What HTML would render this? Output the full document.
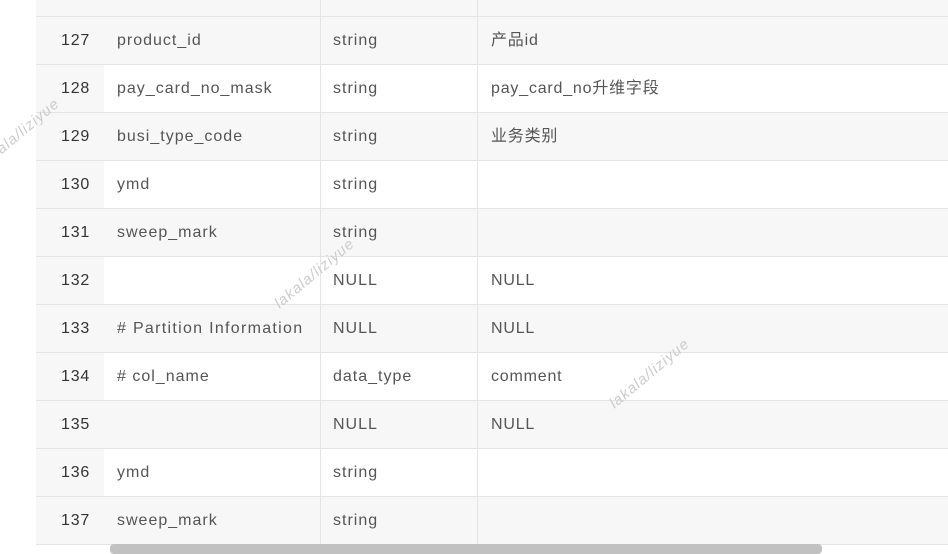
<!DOCTYPE html>
<html><head><meta charset="utf-8"><style>
body{margin:0;width:948px;height:552px;overflow:hidden;background:#fff;font-family:"Liberation Sans","Noto Sans CJK SC",sans-serif;position:relative}
.r{position:absolute;left:36px;width:912px;height:47px;border-bottom:1px solid #e4e4e4;font-size:16px;letter-spacing:1px;color:#555}
.r.g{background:#f7f7f7}
.r .n{position:absolute;left:0;top:0;width:68px;height:47px;background:#f7f7f7;color:#333;line-height:47px;text-indent:25px;letter-spacing:.8px}
.r span{position:absolute;top:0;line-height:47px;white-space:nowrap}
.c1{left:81px}.c2{left:297px}.c3{left:455px}
.c3{letter-spacing:.8px}
.v1,.v2{position:absolute;top:0;width:1px;height:545px;background:#e4e4e4}
.v1{left:320px}.v2{left:477px}
.wm{position:absolute;color:#ccc;font-size:15px;font-style:italic;transform:rotate(-40deg);white-space:nowrap;letter-spacing:1px}
</style></head><body>
<div class="r g" style="top:-31px"><div class="n"></div></div>
<div class="r g" style="top:17px"><div class="n">127</div><span class="c1">product_id</span><span class="c2">string</span><span class="c3">产品id</span></div>
<div class="r" style="top:65px"><div class="n">128</div><span class="c1">pay_card_no_mask</span><span class="c2">string</span><span class="c3">pay_card_no升维字段</span></div>
<div class="r g" style="top:113px"><div class="n">129</div><span class="c1">busi_type_code</span><span class="c2">string</span><span class="c3">业务类别</span></div>
<div class="r" style="top:161px"><div class="n">130</div><span class="c1">ymd</span><span class="c2">string</span></div>
<div class="r g" style="top:209px"><div class="n">131</div><span class="c1">sweep_mark</span><span class="c2">string</span></div>
<div class="r" style="top:257px"><div class="n">132</div><span class="c2">NULL</span><span class="c3">NULL</span></div>
<div class="r g" style="top:305px"><div class="n">133</div><span class="c1" style="letter-spacing:1.3px"># Partition Information</span><span class="c2">NULL</span><span class="c3">NULL</span></div>
<div class="r" style="top:353px"><div class="n">134</div><span class="c1"># col_name</span><span class="c2">data_type</span><span class="c3">comment</span></div>
<div class="r g" style="top:401px"><div class="n">135</div><span class="c2">NULL</span><span class="c3">NULL</span></div>
<div class="r" style="top:449px"><div class="n">136</div><span class="c1">ymd</span><span class="c2">string</span></div>
<div class="r g" style="top:497px"><div class="n">137</div><span class="c1">sweep_mark</span><span class="c2">string</span></div>
<div class="v1"></div><div class="v2"></div>
<div style="position:absolute;left:110px;top:544px;width:712px;height:10px;background:#c1c1c1;border-radius:4px"></div>
<div class="wm" style="left:-30px;top:125px">lakala/liziyue</div>
<div class="wm" style="left:265px;top:265px">lakala/liziyue</div>
<div class="wm" style="left:600px;top:365px">lakala/liziyue</div>
</body></html>
